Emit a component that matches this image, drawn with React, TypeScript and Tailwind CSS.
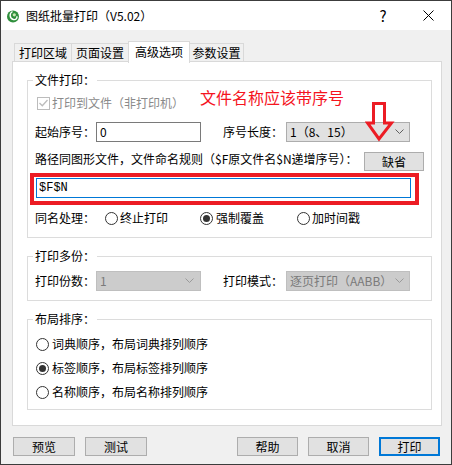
import React from "react";

function Chevron({ color = "#606060" }: { color?: string }) {
  return (
    <svg width="9" height="5" viewBox="0 0 9 5">
      <path d="M0.5 0.5 L4.5 4.5 L8.5 0.5" fill="none" stroke={color} strokeWidth="1" />
    </svg>
  );
}

function Radio({ checked = false }: { checked?: boolean }) {
  return (
    <span className="flex h-[13px] w-[13px] shrink-0 items-center justify-center rounded-full border border-[#333333] bg-white">
      {checked && <span className="h-[7px] w-[7px] rounded-full bg-[#333333]" />}
    </span>
  );
}

function Group({
  title,
  className = "",
  children,
}: {
  title: string;
  className?: string;
  children: React.ReactNode;
}) {
  return (
    <fieldset className={"ml-[14px] mr-[9px] border border-[#dcdcdc] " + className}>
      <legend className="ml-[5px] px-[2px] leading-[16px]">{title}</legend>
      {children}
    </fieldset>
  );
}

function Button({ label, primary = false }: { label: string; primary?: boolean }) {
  return (
    <div
      className={
        "flex h-[19px] w-[61px] items-center justify-center bg-[#e1e1e1] " +
        (primary ? "border-2 border-[#0078d7]" : "border border-[#adadad]")
      }
    >
      {label}
    </div>
  );
}

function AppIcon() {
  return (
    <svg width="14" height="14" viewBox="0 0 14 14">
      <circle cx="7" cy="7.5" r="6" fill="#2f8f3c" />
      <path d="M6.5 2.5 C3 4.5 3.5 9.5 7.5 10.5 C10 11 11.5 9 10.8 7.2" stroke="#ffffff" strokeWidth="1.4" fill="none" />
      <circle cx="8.3" cy="5.8" r="1.6" fill="#c9e8b4" />
    </svg>
  );
}

export default function App() {
  return (
    <div className="flex h-[465px] w-[452px] flex-col border border-[#3c3c3c] bg-[#f0f0f0] font-['Microsoft_YaHei','Noto_Sans_CJK_SC',sans-serif] text-[12px] leading-[16px] text-black">
      {/* title bar */}
      <div className="flex h-[29px] items-center bg-white pl-[5px]">
        <AppIcon />
        <span className="ml-[6px]">图纸批量打印（V5.02）</span>
        <div className="ml-auto flex h-full items-center">
          <div className="flex h-full w-[46px] items-center justify-center text-[15px]">?</div>
          <div className="flex h-full w-[45px] items-center justify-center">
            <svg width="11" height="11" viewBox="0 0 11 11">
              <path d="M0.5 0.5 L10.5 10.5 M10.5 0.5 L0.5 10.5" stroke="#000" strokeWidth="1" />
            </svg>
          </div>
        </div>
      </div>

      <div className="px-[11px] pt-[11px]">
        {/* tabs */}
        <div className="flex h-[20px] items-end pl-[2px]">
          <div className="flex h-[18px] w-[58px] items-center justify-center border border-b-0 border-[#d9d9d9]">打印区域</div>
          <div className="flex h-[18px] w-[57px] items-center justify-center border border-b-0 border-l-0 border-[#d9d9d9]">页面设置</div>
          <div className="relative z-10 -mb-[2px] -ml-px flex h-[22px] w-[62px] items-center justify-center border border-b-0 border-[#d9d9d9] bg-white pb-[2px]">
            高级选项
          </div>
          <div className="flex h-[18px] w-[54px] items-center justify-center border border-b-0 border-l-0 border-[#d9d9d9]">参数设置</div>
        </div>

        {/* panel */}
        <div className="h-[365px] w-[430px] border border-[#d9d9d9] bg-white">
          <Group title="文件打印：" className="mt-[10px]">
            <div className="relative px-[7px] pb-[6px]">
              <div className="flex h-[30px] items-center">
                <div className="flex w-[165px] items-center">
                  <span className="ml-[2px] flex h-[13px] w-[13px] items-center justify-center border border-[#bcbcbc]">
                    <svg width="9" height="8" viewBox="0 0 9 8">
                      <path d="M0.5 4 L3.3 6.8 L8.5 1" fill="none" stroke="#bcbcbc" strokeWidth="1.3" />
                    </svg>
                  </span>
                  <span className="ml-[2px] text-[#8a8a8a]">打印到文件（非打印机）</span>
                </div>
                <span className="-mt-[1px] self-start text-[16px] leading-[20px] text-[#f5141e]">文件名称应该带序号</span>
              </div>

              <div className="flex h-[27px] items-center">
                <span className="w-[61px]">起始序号：</span>
                <div className="flex h-[20px] w-[105px] items-center border border-[#7a7a7a] bg-white pl-[3px]">0</div>
                <span className="ml-[22px] w-[63px]">序号长度：</span>
                <div className="flex h-[20px] w-[124px] items-center justify-between border border-[#adadad] bg-[#e1e1e1] pl-[3px] pr-[5px]">
                  <span>1（8、15）</span>
                  <Chevron />
                </div>
              </div>

              <div className="flex h-[28px] items-center justify-between">
                <span>路径同图形文件，文件命名规则（$F原文件名$N递增序号）：</span>
                <div className="mb-[2px] flex h-[19px] w-[60px] items-center justify-center self-end border border-[#adadad] bg-[#e1e1e1]">
                  缺省
                </div>
              </div>

              <div className="-ml-[5px] h-[32px] w-[389px] border-4 border-[#ec1c24] pl-[2px] pr-[4px] pt-[1px]">
                <div className="flex h-[20px] items-center border border-[#0078d7] bg-white pl-[2px] font-['Liberation_Mono',monospace] text-[12px]">
                  $F$N
                </div>
              </div>

              <div className="flex h-[26px] items-center">
                <span className="w-[70px]">同名处理：</span>
                <div className="flex w-[95px] items-center gap-[2px]">
                  <Radio />
                  <span>终止打印</span>
                </div>
                <div className="flex w-[97px] items-center gap-[3px]">
                  <Radio checked />
                  <span>强制覆盖</span>
                </div>
                <div className="flex items-center gap-[2px]">
                  <Radio />
                  <span>加时间戳</span>
                </div>
              </div>

              {/* annotation arrow */}
              <svg className="absolute left-[337px] top-[12px] z-10" width="30" height="45" viewBox="0 0 30 45">
                <polygon
                  points="8.5,3.5 19.5,3.5 19.5,23 26.5,23 14,39 2.5,23 8.5,23"
                  fill="none"
                  stroke="#ec1c24"
                  strokeWidth="3"
                />
              </svg>
            </div>
          </Group>

          <Group title="打印多份：" className="mt-[10px]">
            <div className="flex h-[36px] items-center px-[7px] pb-[3px]">
              <span className="w-[61px]">打印份数：</span>
              <div className="flex h-[20px] w-[105px] items-center justify-between border border-[#bfbfbf] bg-[#cccccc] pl-[3px] pr-[6px] text-[#7a7a7a]">
                <span>1</span>
                <Chevron color="#9a9a9a" />
              </div>
              <span className="ml-[22px] w-[63px]">打印模式：</span>
              <div className="flex h-[20px] w-[124px] items-center justify-between border border-[#bfbfbf] bg-[#cccccc] pl-[3px] pr-[5px] text-[#7a7a7a]">
                <span>逐页打印（AABB）</span>
                <Chevron color="#9a9a9a" />
              </div>
            </div>
          </Group>

          <Group title="布局排序：" className="mt-[10px]">
            <div className="flex flex-col px-[8px] pb-[5px] pt-[5px]">
              <div className="flex h-[24px] items-center gap-[3px]">
                <Radio />
                <span>词典顺序，布局词典排列顺序</span>
              </div>
              <div className="flex h-[24px] items-center gap-[3px]">
                <Radio checked />
                <span>标签顺序，布局标签排列顺序</span>
              </div>
              <div className="flex h-[24px] items-center gap-[3px]">
                <Radio />
                <span>名称顺序，布局名称排列顺序</span>
              </div>
            </div>
          </Group>
        </div>
      </div>

      {/* bottom buttons */}
      <div className="mt-[11px] flex items-center justify-between pl-[12px] pr-[11px]">
        <div className="flex gap-[10px]">
          <div className="flex h-[19px] w-[62px] items-center justify-center border border-[#adadad] bg-[#e1e1e1]">预览</div>
          <div className="flex h-[19px] w-[62px] items-center justify-center border border-[#adadad] bg-[#e1e1e1]">测试</div>
        </div>
        <div className="flex gap-[10px]">
          <Button label="帮助" />
          <Button label="取消" />
          <Button label="打印" primary />
        </div>
      </div>
    </div>
  );
}
